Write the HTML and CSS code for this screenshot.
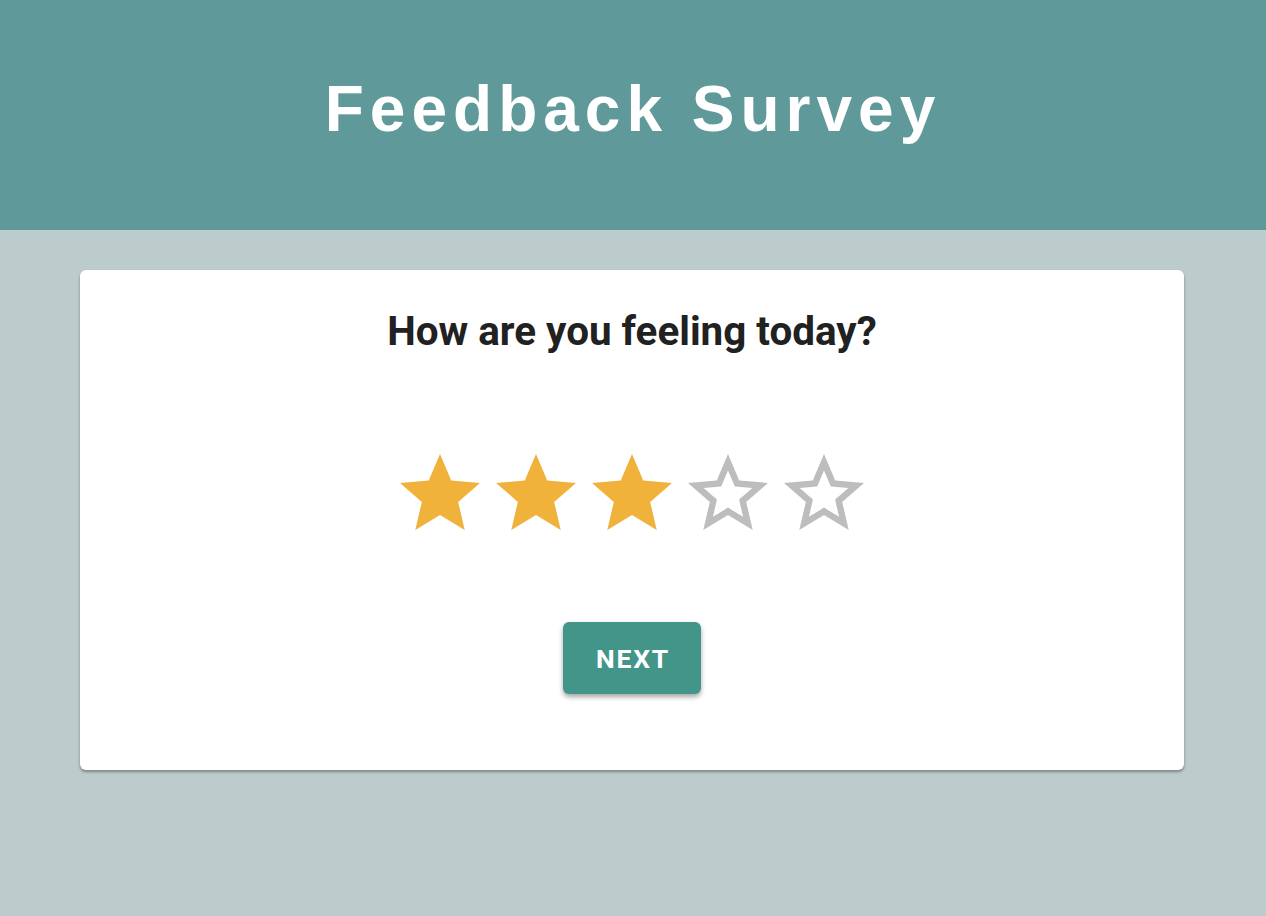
FILE: index.html
```html
<!DOCTYPE html>
<html lang="en">
<head>
<meta charset="utf-8">
<title>Feedback Survey</title>
<link rel="stylesheet" href="styles.css">
</head>
<body>
<header class="top">
  <h1 class="title">Feedback Survey</h1>
</header>
<main class="page">
  <section class="card">
    <h2 class="question">How are you feeling today?</h2>
    <div class="stars">
      <svg class="star filled" viewBox="0 0 24 24"><path d="M12 17.27L18.18 21l-1.64-7.03L22 9.24l-7.19-.61L12 2 9.19 8.63 2 9.24l5.46 4.73L5.82 21z"/></svg>
      <svg class="star filled" viewBox="0 0 24 24"><path d="M12 17.27L18.18 21l-1.64-7.03L22 9.24l-7.19-.61L12 2 9.19 8.63 2 9.24l5.46 4.73L5.82 21z"/></svg>
      <svg class="star filled" viewBox="0 0 24 24"><path d="M12 17.27L18.18 21l-1.64-7.03L22 9.24l-7.19-.61L12 2 9.19 8.63 2 9.24l5.46 4.73L5.82 21z"/></svg>
      <svg class="star empty" viewBox="0 0 24 24"><path d="M22 9.24l-7.19-.62L12 2 9.19 8.63 2 9.24l5.46 4.73L5.82 21 12 17.27 18.18 21l-1.63-7.03L22 9.24zM12 15.4l-3.76 2.27 1-4.28-3.32-2.88 4.38-.38L12 6.1l1.71 4.04 4.38.38-3.32 2.88 1 4.28L12 15.4z"/></svg>
      <svg class="star empty" viewBox="0 0 24 24"><path d="M22 9.24l-7.19-.62L12 2 9.19 8.63 2 9.24l5.46 4.73L5.82 21 12 17.27 18.18 21l-1.63-7.03L22 9.24zM12 15.4l-3.76 2.27 1-4.28-3.32-2.88 4.38-.38L12 6.1l1.71 4.04 4.38.38-3.32 2.88 1 4.28L12 15.4z"/></svg>
    </div>
    <button class="next" type="button">NEXT</button>
  </section>
</main>
</body>
</html>
```
FILE: styles.css
```css
* { box-sizing: border-box; }
html, body { margin: 0; padding: 0; }
body {
  background: #bccbcb;
  font-family: Roboto, "Liberation Sans", sans-serif;
  min-height: 916px;
}
.top {
  height: 230px;
  background: #5f9999;
  display: flex;
  align-items: center;
  justify-content: center;
}
.title {
  margin: 0;
  padding-bottom: 12px;
  font-family: "Liberation Sans", Arial, sans-serif;
  font-weight: 700;
  font-size: 64px;
  letter-spacing: 6px;
  color: #ffffff;
}
.page {
  padding: 40px 82px 0 80px;
}
.card {
  background: #ffffff;
  border-radius: 6px;
  box-shadow: 0 2px 3px rgba(0, 0, 0, 0.35);
  height: 500px;
  display: flex;
  flex-direction: column;
  align-items: center;
  padding-top: 36px;
}
.question {
  margin: 0;
  font-size: 40.4px;
  font-weight: 700;
  color: #212121;
  line-height: 52px;
}
.stars {
  display: flex;
  margin-top: 88px;
}
.star {
  width: 96px;
  height: 96px;
  display: block;
}
.star.filled { fill: #f0b23b; }
.star.empty { fill: #bdbdbd; }
.next {
  margin-top: 80px;
  width: 138px;
  height: 72px;
  border: none;
  border-radius: 6px;
  background: #43958a;
  color: #ffffff;
  font-family: Roboto, "Liberation Sans", sans-serif;
  font-weight: 700;
  font-size: 26.5px;
  letter-spacing: 1.8px;
  padding: 0 0 0 2px;
  box-shadow: 0 3px 5px rgba(0, 0, 0, 0.35);
}
```
